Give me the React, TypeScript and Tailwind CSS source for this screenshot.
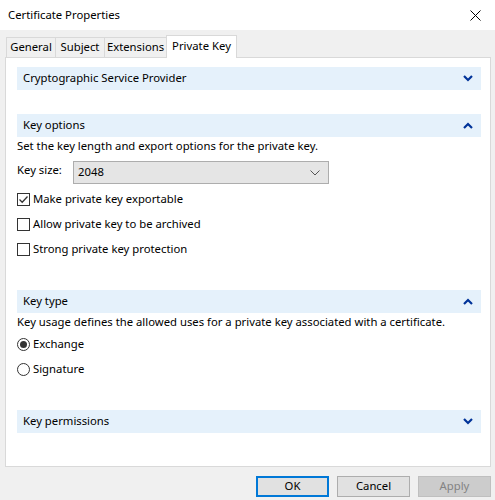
import React from "react";

const font = { fontFamily: '"Noto Sans", "Segoe UI", sans-serif' };

const Chevron = ({ up }: { up?: boolean }) => (
  <svg width="10" height="7" viewBox="0 0 10 7" className="text-[#003399]">
    {up ? (
      <path d="M1 6 L5 2 L9 6" fill="none" stroke="currentColor" strokeWidth="2.2" />
    ) : (
      <path d="M1 1 L5 5 L9 1" fill="none" stroke="currentColor" strokeWidth="2.2" />
    )}
  </svg>
);

const SectionHeader = ({ title, open }: { title: string; open?: boolean }) => (
  <div className="flex h-[23px] items-center justify-between bg-[#e5f1fb] pl-[6px] pr-[8px]">
    <span className="text-black">{title}</span>
    <Chevron up={open} />
  </div>
);

const Checkbox = ({ label, checked }: { label: string; checked?: boolean }) => (
  <div className="flex h-[25px] items-center gap-[3px]">
    <div className="flex h-[13px] w-[13px] items-center justify-center border border-[#333333] bg-white">
      {checked && (
        <svg width="11" height="11" viewBox="0 0 11 11">
          <path d="M1.5 5.5 L4.2 8.2 L9.5 2.5" fill="none" stroke="#333" strokeWidth="1.3" />
        </svg>
      )}
    </div>
    <span className="text-black">{label}</span>
  </div>
);

const Radio = ({ label, checked }: { label: string; checked?: boolean }) => (
  <div className="flex h-[25px] items-center gap-[3px]">
    <div className="flex h-[13px] w-[13px] items-center justify-center rounded-full border border-[#333333] bg-white">
      {checked && <div className="h-[7px] w-[7px] rounded-full bg-[#333333]" />}
    </div>
    <span className="text-black">{label}</span>
  </div>
);

export default function App() {
  const tabs = [
    { label: "General", w: "w-[50px]" },
    { label: "Subject", w: "w-[50px]" },
    { label: "Extensions", w: "w-[63px]" },
  ];

  return (
    <div style={font} className="flex h-[500px] w-[495px] flex-col bg-[#f0f0f0] text-[11.3px]">
      {/* Title bar */}
      <div className="flex h-[30px] items-center justify-between bg-white pl-[8px] pr-[14px]">
        <span className="text-black">Certificate Properties</span>
        <svg width="11" height="11" viewBox="0 0 11 11">
          <path d="M0.5 0.5 L10.5 10.5 M10.5 0.5 L0.5 10.5" stroke="#000" strokeWidth="1" />
        </svg>
      </div>

      {/* Tabs */}
      <div className="flex h-[27px] items-end pl-[6px] pt-[5px]">
        {tabs.map((t) => (
          <div
            key={t.label}
            className={`${t.w} -mr-px flex h-[20px] items-center justify-center border border-b-0 border-[#d9d9d9] bg-[#f0f0f0] text-black`}
          >
            {t.label}
          </div>
        ))}
        <div className="relative z-10 -mb-px flex h-[23px] w-[71px] items-center justify-center border border-b-0 border-[#d9d9d9] bg-white pb-[2px] text-black">
          Private Key
        </div>
      </div>

      {/* Panel */}
      <div className="mx-[5px] h-[410px] w-[486px] border border-[#d9d9d9] bg-white pl-[11px] pr-[9px] pt-[9px]">
        <SectionHeader title="Cryptographic Service Provider" />

        <div className="mt-[24px]">
          <SectionHeader title="Key options" open />
          <div className="flex h-[18px] items-center text-black">
            Set the key length and export options for the private key.
          </div>
          <div className="mt-[6px] flex items-center">
            <span className="w-[56px] pb-[4px] text-black">Key size:</span>
            <div className="flex h-[23px] w-[256px] items-center justify-between border border-[#adadad] bg-[#e5e5e5] pl-[4px] pr-[8px]">
              <span className="text-black">2048</span>
              <svg width="10" height="6" viewBox="0 0 10 6">
                <path d="M0.5 0.5 L5 5 L9.5 0.5" fill="none" stroke="#555" strokeWidth="1" />
              </svg>
            </div>
          </div>
          <div className="mt-[3px]">
            <Checkbox label="Make private key exportable" checked />
            <Checkbox label="Allow private key to be archived" />
            <Checkbox label="Strong private key protection" />
          </div>
        </div>

        <div className="mt-[28px]">
          <SectionHeader title="Key type" open />
          <div className="flex h-[18px] items-center text-black">
            Key usage defines the allowed uses for a private key associated with a certificate.
          </div>
          <div className="mt-px">
            <Radio label="Exchange" checked />
            <Radio label="Signature" />
          </div>
        </div>

        <div className="mt-[28px]">
          <SectionHeader title="Key permissions" />
        </div>
      </div>

      {/* Buttons */}
      <div className="mt-[9px] flex justify-end gap-[8px] pr-[4px]">
        <button className="h-[21px] w-[73px] border-2 border-[#0078d7] bg-[#e1e1e1] text-black">
          OK
        </button>
        <button className="h-[21px] w-[73px] border border-[#adadad] bg-[#e1e1e1] text-black">
          Cancel
        </button>
        <button className="h-[21px] w-[73px] border border-[#bfbfbf] bg-[#cccccc] text-[#838383]">
          Apply
        </button>
      </div>
    </div>
  );
}
